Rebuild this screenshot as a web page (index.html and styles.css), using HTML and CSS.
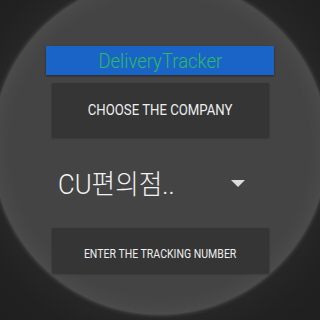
FILE: index.html
```html
<!DOCTYPE html>
<html>
<head>
<meta charset="utf-8">
<link rel="stylesheet" href="styles.css">
</head>
<body>
<div class="screen">
  <div class="title"><span class="title-text">DeliveryTracker</span></div>
  <div class="btn btn-choose"><span class="btn-text">CHOOSE THE COMPANY</span></div>
  <div class="spinner">
    <span class="spinner-text">CU편의점..</span>
    <span class="arrow"></span>
  </div>
  <div class="btn btn-enter"><span class="btn-text btn-text-small">ENTER THE TRACKING NUMBER</span></div>
</div>
</body>
</html>
```
FILE: styles.css
```css
html, body {
  margin: 0;
  padding: 0;
}
body {
  width: 320px;
  height: 320px;
  overflow: hidden;
  font-family: Roboto, "Noto Sans CJK KR", sans-serif;
  background: radial-gradient(circle at 160px 147px,
    #444444 0px, #444444 150px, #484848 162px, #4b4b4b 167px,
    #303030 169.5px, #262626 172px, #212121 200px, #1e1e1e 260px);
}
.screen {
  display: flex;
  flex-direction: column;
  padding-top: 46px;
}
.title {
  margin: 0 46px 0 46px;
  height: 29px;
  background: #1a64c8;
  display: flex;
  align-items: center;
  justify-content: center;
  box-shadow: 0 1px 2px rgba(0, 0, 0, 0.45);
}
.title-text {
  display: inline-block;
  white-space: nowrap;
  color: #2cbb5e;
  font-size: 21px;
  font-weight: 300;
  transform: scaleX(0.88);
}
.btn {
  margin: 0 51px 0 52px;
  background: #353535;
  display: flex;
  align-items: center;
  justify-content: center;
  box-shadow: 0 1px 2px rgba(0, 0, 0, 0.35);
  color: #eeeeee;
}
.btn-choose {
  margin-top: 8px;
  height: 54px;
}
.btn-enter {
  height: 45px;
  box-sizing: border-box;
  padding-top: 6px;
}
.btn-text {
  display: inline-block;
  white-space: nowrap;
  font-size: 15.5px;
  transform: scaleX(0.85);
}
.btn-text-small {
  font-size: 13px;
  transform: scaleX(0.81);
}
.spinner {
  height: 91px;
  margin: 0 75px 0 58px;
  display: flex;
  align-items: center;
  justify-content: space-between;
}
.spinner-text {
  display: inline-block;
  white-space: nowrap;
  color: #f2f2f2;
  font-size: 27px;
  font-weight: 300;
  transform: scaleX(0.95);
  transform-origin: left center;
}
.arrow {
  width: 0;
  height: 0;
  border-left: 7px solid transparent;
  border-right: 7px solid transparent;
  border-top: 7px solid #dddddd;
  margin-top: 1px;
}
```
